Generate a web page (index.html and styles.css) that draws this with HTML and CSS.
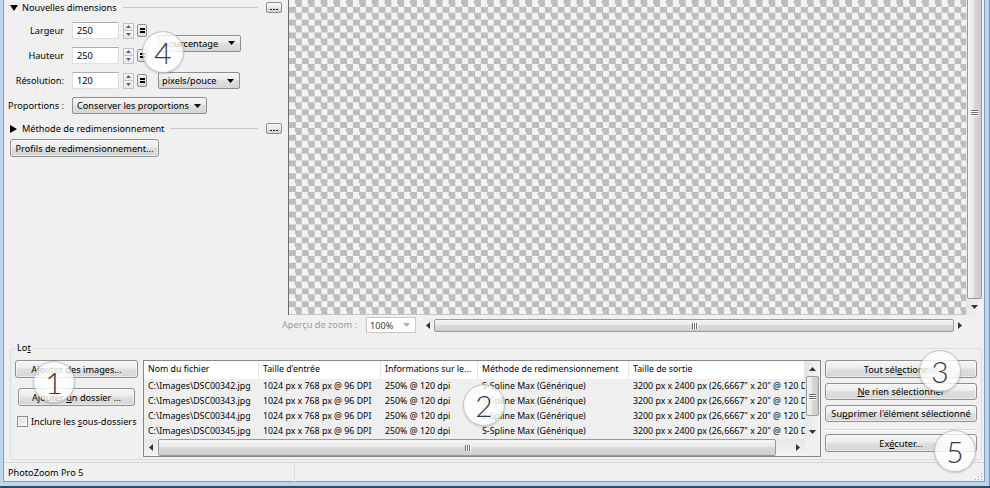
FILE: index.html
```html
<!DOCTYPE html>
<html lang="fr">
<head>
<meta charset="utf-8">
<title>PhotoZoom Pro 5</title>
<link rel="stylesheet" href="styles.css">
</head>
<body>
<div class="frame">
  <div class="client">
    <div class="top">
      <aside class="settings">
        <div class="section-head">
          <svg class="tri" width="8" height="6" viewBox="0 0 8 6"><path d="M0 0h8L4 6z"/></svg>
          <span class="sh-title">Nouvelles dimensions</span>
          <span class="sh-line"></span>
          <span class="dots"><svg width="8" height="1" viewBox="0 0 8 1"><path d="M0 0h2v1H0zM3 0h2v1H3zM6 0h2v1H6z"/></svg></span>
        </div>
        <div class="dims">
          <span class="lbl r1">Largeur</span>
          <span class="field r1">250</span>
          <span class="spin r1"><i><svg width="5" height="3" viewBox="0 0 5 3"><path d="M0 3L2.5 0 5 3z"/></svg></i><i><svg width="5" height="3" viewBox="0 0 5 3"><path d="M0 0h5L2.5 3z"/></svg></i></span>
          <span class="link r1"><svg width="5" height="5" viewBox="0 0 5 5"><path d="M0 0h5v2H0zM0 3h5v2H0z"/></svg></span>

          <span class="lbl r2">Hauteur</span>
          <span class="field r2">250</span>
          <span class="spin r2"><i><svg width="5" height="3" viewBox="0 0 5 3"><path d="M0 3L2.5 0 5 3z"/></svg></i><i><svg width="5" height="3" viewBox="0 0 5 3"><path d="M0 0h5L2.5 3z"/></svg></i></span>
          <span class="link r2"><svg width="5" height="5" viewBox="0 0 5 5"><path d="M0 0h5v2H0zM0 3h5v2H0z"/></svg></span>

          <span class="combo c-unit">pourcentage<svg width="7" height="4" viewBox="0 0 7 4"><path d="M0 0h7L3.5 4z"/></svg></span>

          <span class="lbl r3">Résolution:</span>
          <span class="field r3">120</span>
          <span class="spin r3"><i><svg width="5" height="3" viewBox="0 0 5 3"><path d="M0 3L2.5 0 5 3z"/></svg></i><i><svg width="5" height="3" viewBox="0 0 5 3"><path d="M0 0h5L2.5 3z"/></svg></i></span>
          <span class="link r3"><svg width="5" height="5" viewBox="0 0 5 5"><path d="M0 0h5v2H0zM0 3h5v2H0z"/></svg></span>
          <span class="combo c-res">pixels/pouce<svg width="7" height="4" viewBox="0 0 7 4"><path d="M0 0h7L3.5 4z"/></svg></span>

          <span class="lbl r4">Proportions :</span>
          <span class="combo c-prop">Conserver les proportions<svg width="7" height="4" viewBox="0 0 7 4"><path d="M0 0h7L3.5 4z"/></svg></span>
        </div>
        <div class="section-head sh2">
          <svg class="tri" width="7" height="8" viewBox="0 0 7 8"><path d="M0 0l7 4-7 4z"/></svg>
          <span class="sh-title">Méthode de redimensionnement</span>
          <span class="sh-line"></span>
          <span class="dots"><svg width="8" height="1" viewBox="0 0 8 1"><path d="M0 0h2v1H0zM3 0h2v1H3zM6 0h2v1H6z"/></svg></span>
        </div>
        <button class="btn profils">Profils de redimensionnement...</button>
      </aside>

      <section class="preview">
        <div class="canvas-row">
          <div class="canvas"></div>
          <div class="vs-big">
            <span class="vthumb"><i class="grip-h"><b></b><b></b><b></b></i></span>
            <span class="varr"><svg width="7" height="4" viewBox="0 0 7 4"><path d="M0 0h7L3.5 4z"/></svg></span>
          </div>
        </div>
        <div class="zoom-row">
          <span class="zoom-lbl">Aperçu de zoom :</span>
          <span class="zoom-combo">100%<svg width="7" height="4" viewBox="0 0 7 4"><path d="M0 0h7L3.5 4z"/></svg></span>
          <div class="hs hs-zoom">
            <span class="harr"><svg width="4" height="7" viewBox="0 0 4 7"><path d="M4 0v7L0 3.5z"/></svg></span>
            <span class="htrack"><span class="hthumb"><i class="grip-v"><b></b><b></b><b></b></i></span></span>
            <span class="harr"><svg width="4" height="7" viewBox="0 0 4 7"><path d="M0 0v7L4 3.5z"/></svg></span>
          </div>
        </div>
      </section>
    </div>

    <fieldset class="lot">
      <legend>Lo<u>t</u></legend>
      <div class="lot-body">
        <div class="lot-left">
          <button class="btn add-img">Ajouter des images...</button>
          <button class="btn add-dir">Ajouter <u>u</u>n dossier ...</button>
          <label class="check"><span class="cb"></span><span>Inclure les <u>s</u>ous-dossiers</span></label>
        </div>

        <div class="list">
          <div class="lv">
            <div class="lv-head">
              <span>Nom du fichier</span><span>Taille d'entrée</span><span>Informations sur le...</span><span>Méthode de redimensionnement</span><span>Taille de sortie</span>
            </div>
            <div class="lv-row"><span>C:\Images\DSC00342.jpg</span><span>1024 px x 768 px @ 96 DPI</span><span>250% @ 120 dpi</span><span>S-Spline Max (Générique)</span><span>3200 px x 2400 px (26,6667" x 20" @ 120 DPI)</span></div>
            <div class="lv-row"><span>C:\Images\DSC00343.jpg</span><span>1024 px x 768 px @ 96 DPI</span><span>250% @ 120 dpi</span><span>S-Spline Max (Générique)</span><span>3200 px x 2400 px (26,6667" x 20" @ 120 DPI)</span></div>
            <div class="lv-row"><span>C:\Images\DSC00344.jpg</span><span>1024 px x 768 px @ 96 DPI</span><span>250% @ 120 dpi</span><span>S-Spline Max (Générique)</span><span>3200 px x 2400 px (26,6667" x 20" @ 120 DPI)</span></div>
            <div class="lv-row"><span>C:\Images\DSC00345.jpg</span><span>1024 px x 768 px @ 96 DPI</span><span>250% @ 120 dpi</span><span>S-Spline Max (Générique)</span><span>3200 px x 2400 px (26,6667" x 20" @ 120 DPI)</span></div>
          </div>
          <div class="vs-small">
            <span class="varr"><svg width="7" height="4" viewBox="0 0 7 4"><path d="M0 4h7L3.5 0z"/></svg></span>
            <span class="vtrack"><span class="vthumb-s"><i class="grip-h"><b></b><b></b><b></b></i></span></span>
            <span class="varr"><svg width="7" height="4" viewBox="0 0 7 4"><path d="M0 0h7L3.5 4z"/></svg></span>
          </div>
          <div class="hs hs-list">
            <span class="harr"><svg width="4" height="7" viewBox="0 0 4 7"><path d="M4 0v7L0 3.5z"/></svg></span>
            <span class="htrack"><span class="hthumb"><i class="grip-v"><b></b><b></b><b></b></i></span></span>
            <span class="harr"><svg width="4" height="7" viewBox="0 0 4 7"><path d="M0 0v7L4 3.5z"/></svg></span>
          </div>
          <div class="corner"></div>
        </div>

        <div class="lot-right">
          <button class="btn b-all">Tout sél<u>e</u>ctionner</button>
          <button class="btn b-none"><u>N</u>e rien sélectionner</button>
          <button class="btn b-del">Su<u>p</u>primer l'élément sélectionné</button>
          <span class="sep"></span>
          <button class="btn b-run">Ex<u>é</u>cuter...</button>
        </div>
      </div>
    </fieldset>

    <footer class="status">
      <span class="pane">PhotoZoom Pro 5</span>
      <span class="pane-rest"></span>
      <svg class="sgrip" width="10" height="10" viewBox="0 0 10 10"><path d="M8 2h1v1H8zM8 5h1v1H8zM5 5h1v1H5zM8 8h1v1H8zM5 8h1v1H5zM2 8h1v1H2z" fill="#a6a6a6"/></svg>
    </footer>
  </div>
</div>

<span class="badge b1">1</span>
<span class="badge b2">2</span>
<span class="badge b3">3</span>
<span class="badge b4">4</span>
<span class="badge b5">5</span>
</body>
</html>
```

FILE: styles.css
```css
* { box-sizing: border-box; }
html, body { margin: 0; padding: 0; }
body {
  width: 990px;
  height: 488px;
  overflow: hidden;
  position: relative;
  font-family: "Noto Sans", "Open Sans", sans-serif;
  font-size: 9.2px;
  color: #000;
  background: #bdd5ee;
}
u { text-decoration: underline; text-underline-offset: 1px; }

.frame {
  height: 488px;
  padding: 0 5px 6px 3px;
  background: #bdd5ee;
  box-shadow: inset 0 -2px 0 #2e4b67, inset -1px 0 0 #6f8fae;
}
.client {
  height: 482px;
  background: #f0f0f0;
  border: 1px solid #7f9db9;
  border-top: 0;
  display: flex;
  flex-direction: column;
}

/* ---------- top ---------- */
.top { height: 341px; flex: none; display: flex; }
.settings { width: 284px; flex: none; }

.section-head {
  display: flex;
  align-items: center;
  height: 15px;
  padding-left: 6px;
}
.tri { flex: none; margin-right: 4px; fill: #000; }
.sh2 .tri { margin-right: 5px; }
.sh-line { flex: 1; height: 1px; background: #c9c9c9; margin: 0 8px 0 6px; }
.dots {
  width: 16px; height: 11px;
  margin-right: 6px;
  border: 1px solid #8e8f8f;
  border-radius: 2px;
  background: linear-gradient(#f6f6f6, #e9e9e9 50%, #dcdcdc 51%, #d3d3d3);
  display: flex; align-items: flex-end; justify-content: center;
  padding-bottom: 2px;
  fill: #222;
}

.dims {
  margin-top: 7px;
  display: grid;
  grid-template-columns: 68px 51px 14px 21px 83px;
  grid-template-rows: repeat(4, 17px);
  row-gap: 8px;
}
.r1 { grid-row: 1; }
.r2 { grid-row: 2; }
.r3 { grid-row: 3; }
.r4 { grid-row: 4; }
.lbl { grid-column: 1; text-align: right; padding-right: 8px; align-self: center; white-space: nowrap; }
.field {
  grid-column: 2;
  width: 47px; height: 17px;
  background: #fff;
  border: 1px solid #dbdfe6;
  border-top-color: #abadb3;
  padding-left: 4px;
  line-height: 15px;
}
.spin {
  grid-column: 3;
  width: 11px; height: 16px;
  align-self: center;
  display: flex; flex-direction: column;
}
.spin i {
  flex: 1;
  display: flex; align-items: center; justify-content: center;
  border: 1px solid #c3c3c3;
  background: linear-gradient(#f7f7f7, #e8e8e8);
  fill: #4d6185;
}
.spin i + i { border-top: 0; }
.link {
  grid-column: 4;
  width: 10px; height: 13px;
  align-self: center;
  border: 1px solid #8e8f8f;
  border-radius: 2px;
  background: linear-gradient(#f4f4f4, #dcdcdc);
  display: flex; align-items: center; justify-content: center;
  fill: #000;
}
.combo {
  height: 17px;
  border: 1px solid #8e8f8f;
  border-radius: 2px;
  background: linear-gradient(#f4f4f4, #ececec 45%, #dfdfdf 50%, #d5d5d5);
  padding-left: 4px;
  display: flex; align-items: center; justify-content: space-between;
  padding-right: 5px;
  white-space: nowrap;
}
.combo svg { flex: none; fill: #000; }
.c-unit { grid-column: 5; grid-row: 1 / 3; align-self: center; width: 83px; }
.c-res { grid-column: 5; grid-row: 3; width: 82px; padding-left: 3px; }
.c-prop { grid-column: 2 / 6; grid-row: 4; width: 135px; }

.sh2 { margin-top: 7px; }
.profils {
  display: block;
  margin: 3px 0 0 6px;
  width: 149px;
  height: 19px;
}

.btn {
  font: inherit;
  color: #000;
  border: 1px solid #8e8f8f;
  border-radius: 3px;
  background: linear-gradient(#f5f5f5, #ededed 45%, #dfdfdf 50%, #d5d5d5);
  box-shadow: inset 0 0 0 1px rgba(255,255,255,.55);
  padding: 0;
  height: 18px;
  white-space: nowrap;
}

/* ---------- preview ---------- */
.preview { flex: 1; display: flex; flex-direction: column; min-width: 0; }
.canvas-row {
  height: 315px;
  flex: none;
  display: flex;
  border-left: 1px solid #6d6d6d;
  margin-right: 1px;
}
.canvas {
  flex: 1;
  background: repeating-conic-gradient(#bdbdbd 0 25%, #f3f3f3 0 50%) 0 0 / 12.8px 12.8px;
  border-bottom: 1px solid #c6c6c6;
}
.vs-big {
  width: 17px;
  display: flex; flex-direction: column;
  background: linear-gradient(90deg, #e6e6e6, #f4f4f4);
}
.vthumb {
  height: 299px;
  margin: 0 1px;
  border: 1px solid #9a9a9a;
  border-top: 0;
  border-radius: 0 0 2px 2px;
  background: linear-gradient(90deg, #f3f3f3, #e7e7e7 45%, #d8d8d8 50%, #cbcbcb);
  display: flex; flex-direction: column; align-items: center;
  padding-top: 110px;
}
.varr { flex: 1; display: flex; align-items: center; justify-content: center; fill: #333; }
.grip-h { display: flex; flex-direction: column; gap: 1px; }
.grip-h b { display: block; width: 7px; height: 1px; background: #6f6f6f; box-shadow: 0 1px 0 #fff; }
.grip-v { display: flex; gap: 1px; }
.grip-v b { display: block; width: 1px; height: 6px; background: #6f6f6f; box-shadow: 1px 0 0 #fff; }

.zoom-row {
  flex: 1;
  display: flex;
  align-items: flex-start;
  margin-left: -6px;
  padding-top: 2px;
}
.zoom-lbl { width: 84px; color: #9c9c9c; line-height: 16px; white-space: nowrap; }
.zoom-combo {
  width: 50px; height: 16px;
  background: #fff;
  border: 1px solid #c9c9c9;
  display: flex; align-items: center; justify-content: space-between;
  padding: 0 5px 0 3px;
  color: #3a3a3a;
}
.zoom-combo svg { fill: #b0b0b0; }
.hs { display: flex; }
.hs-zoom { width: 544px; height: 13px; margin: 2px 0 0 6px; }
.harr { width: 12px; flex: none; display: flex; align-items: center; justify-content: center; fill: #333; }
.htrack { flex: 1; display: flex; }
.hthumb {
  flex: 1;
  border: 1px solid #9a9a9a;
  border-radius: 2px;
  background: linear-gradient(#f5f5f5, #e9e9e9 45%, #dadada 50%, #cfcfcf);
  display: flex; align-items: center; justify-content: center;
}

/* ---------- lot ---------- */
.lot {
  margin: 0 2px 2px 6px;
  padding: 5px 4px 2px;
  border: 1px solid #d5dfe5;
  border-radius: 3px;
  min-width: 0;
  flex: none;
}
.lot legend { padding: 0 2px; line-height: 14px; }
.lot-body { display: flex; height: 97px; }

.lot-left { width: 123px; flex: none; display: flex; flex-direction: column; align-items: center; }
.add-img { width: 123px; height: 18px; }
.add-dir { width: 117px; height: 18px; margin-top: 10px; }
.check { align-self: flex-start; display: flex; align-items: center; margin-top: 9px; padding-left: 2px; white-space: nowrap; }
.cb {
  width: 11px; height: 11px; margin-right: 3px;
  border: 1px solid #8e8f8f;
  background: linear-gradient(135deg, #dcdcdc, #f7f7f7);
  box-shadow: inset 0 0 0 1px #f4f4f4;
}

.list {
  width: 678px;
  margin-left: 5px;
  flex: none;
  border: 1px solid #828790;
  background: #fff;
  display: grid;
  grid-template-columns: 1fr 15px;
  grid-template-rows: 78px 17px;
  font-size: 8.8px;
}
.lv { overflow: hidden; }
.lv-head, .lv-row {
  display: grid;
  grid-template-columns: 115px 122px 97px 151px 176px;
  white-space: nowrap;
}
.lv-head { height: 18px; line-height: 17px; background: #fff; }
.lv-head span { padding-left: 4px; border-right: 1px solid #e5e5e5; overflow: hidden; }
.lv-row { height: 15px; line-height: 15px; background: #efefef; }
.lv-row span { padding-left: 4px; overflow: hidden; }

.vs-small {
  grid-column: 2; grid-row: 1;
  display: flex; flex-direction: column;
  background: linear-gradient(90deg, #e6e6e6, #f4f4f4);
}
.vs-small .varr { flex: none; height: 15px; }
.vtrack { flex: 1; display: flex; flex-direction: column; }
.vthumb-s {
  height: 40px;
  margin: 0 1px;
  border: 1px solid #9a9a9a;
  border-radius: 2px;
  background: linear-gradient(90deg, #f3f3f3, #e7e7e7 45%, #d8d8d8 50%, #cbcbcb);
  display: flex; align-items: center; justify-content: center;
}
.hs-list { grid-column: 1; grid-row: 2; background: linear-gradient(#e6e6e6, #f4f4f4); }
.hs-list .harr { width: 14px; }
.hs-list .hthumb { margin-right: 15px; }
.corner { grid-column: 2; grid-row: 2; background: #f0f0f0; }

.lot-right { width: 152px; margin-left: 4px; flex: none; display: flex; flex-direction: column; }
.b-all { height: 18px; }
.b-none { height: 17px; margin-top: 5px; }
.b-del { height: 17px; margin-top: 5px; }
.sep { height: 2px; margin-top: 7px; border-top: 1px solid #d5d5d5; border-bottom: 1px solid #fff; }
.b-run { height: 18px; margin-top: 3px; }

/* ---------- status ---------- */
.status {
  flex: 1;
  display: flex;
  align-items: stretch;
  border-top: 1px solid #d7d7d7;
  position: relative;
}
.pane { width: 291px; padding-left: 4px; line-height: 19px; border-right: 1px solid #dcdcdc; }
.pane-rest { flex: 1; }
.sgrip { position: absolute; right: 1px; bottom: 1px; }

/* ---------- numbered badges ---------- */
.badge {
  position: absolute;
  width: 42px; height: 42px;
  border-radius: 50%;
  background: radial-gradient(circle, rgba(255,255,255,.88) 0 35%, rgba(255,255,255,.72) 70%, rgba(245,245,245,.6) 100%);
  border: 1px solid rgba(150,150,150,.55);
  box-shadow: 0 1px 2px rgba(0,0,0,.18);
  font-family: "Lato", "Noto Sans", sans-serif;
  font-weight: 300;
  font-size: 30px;
  color: #3a3a3a;
  display: flex; align-items: center; justify-content: center;
  line-height: 1;
}
.b1 { left: 33px; top: 361px; }
.b2 { left: 463px; top: 384px; }
.b3 { left: 919px; top: 350px; }
.b4 { left: 142px; top: 31px; }
.b5 { left: 934px; top: 430px; }
```
